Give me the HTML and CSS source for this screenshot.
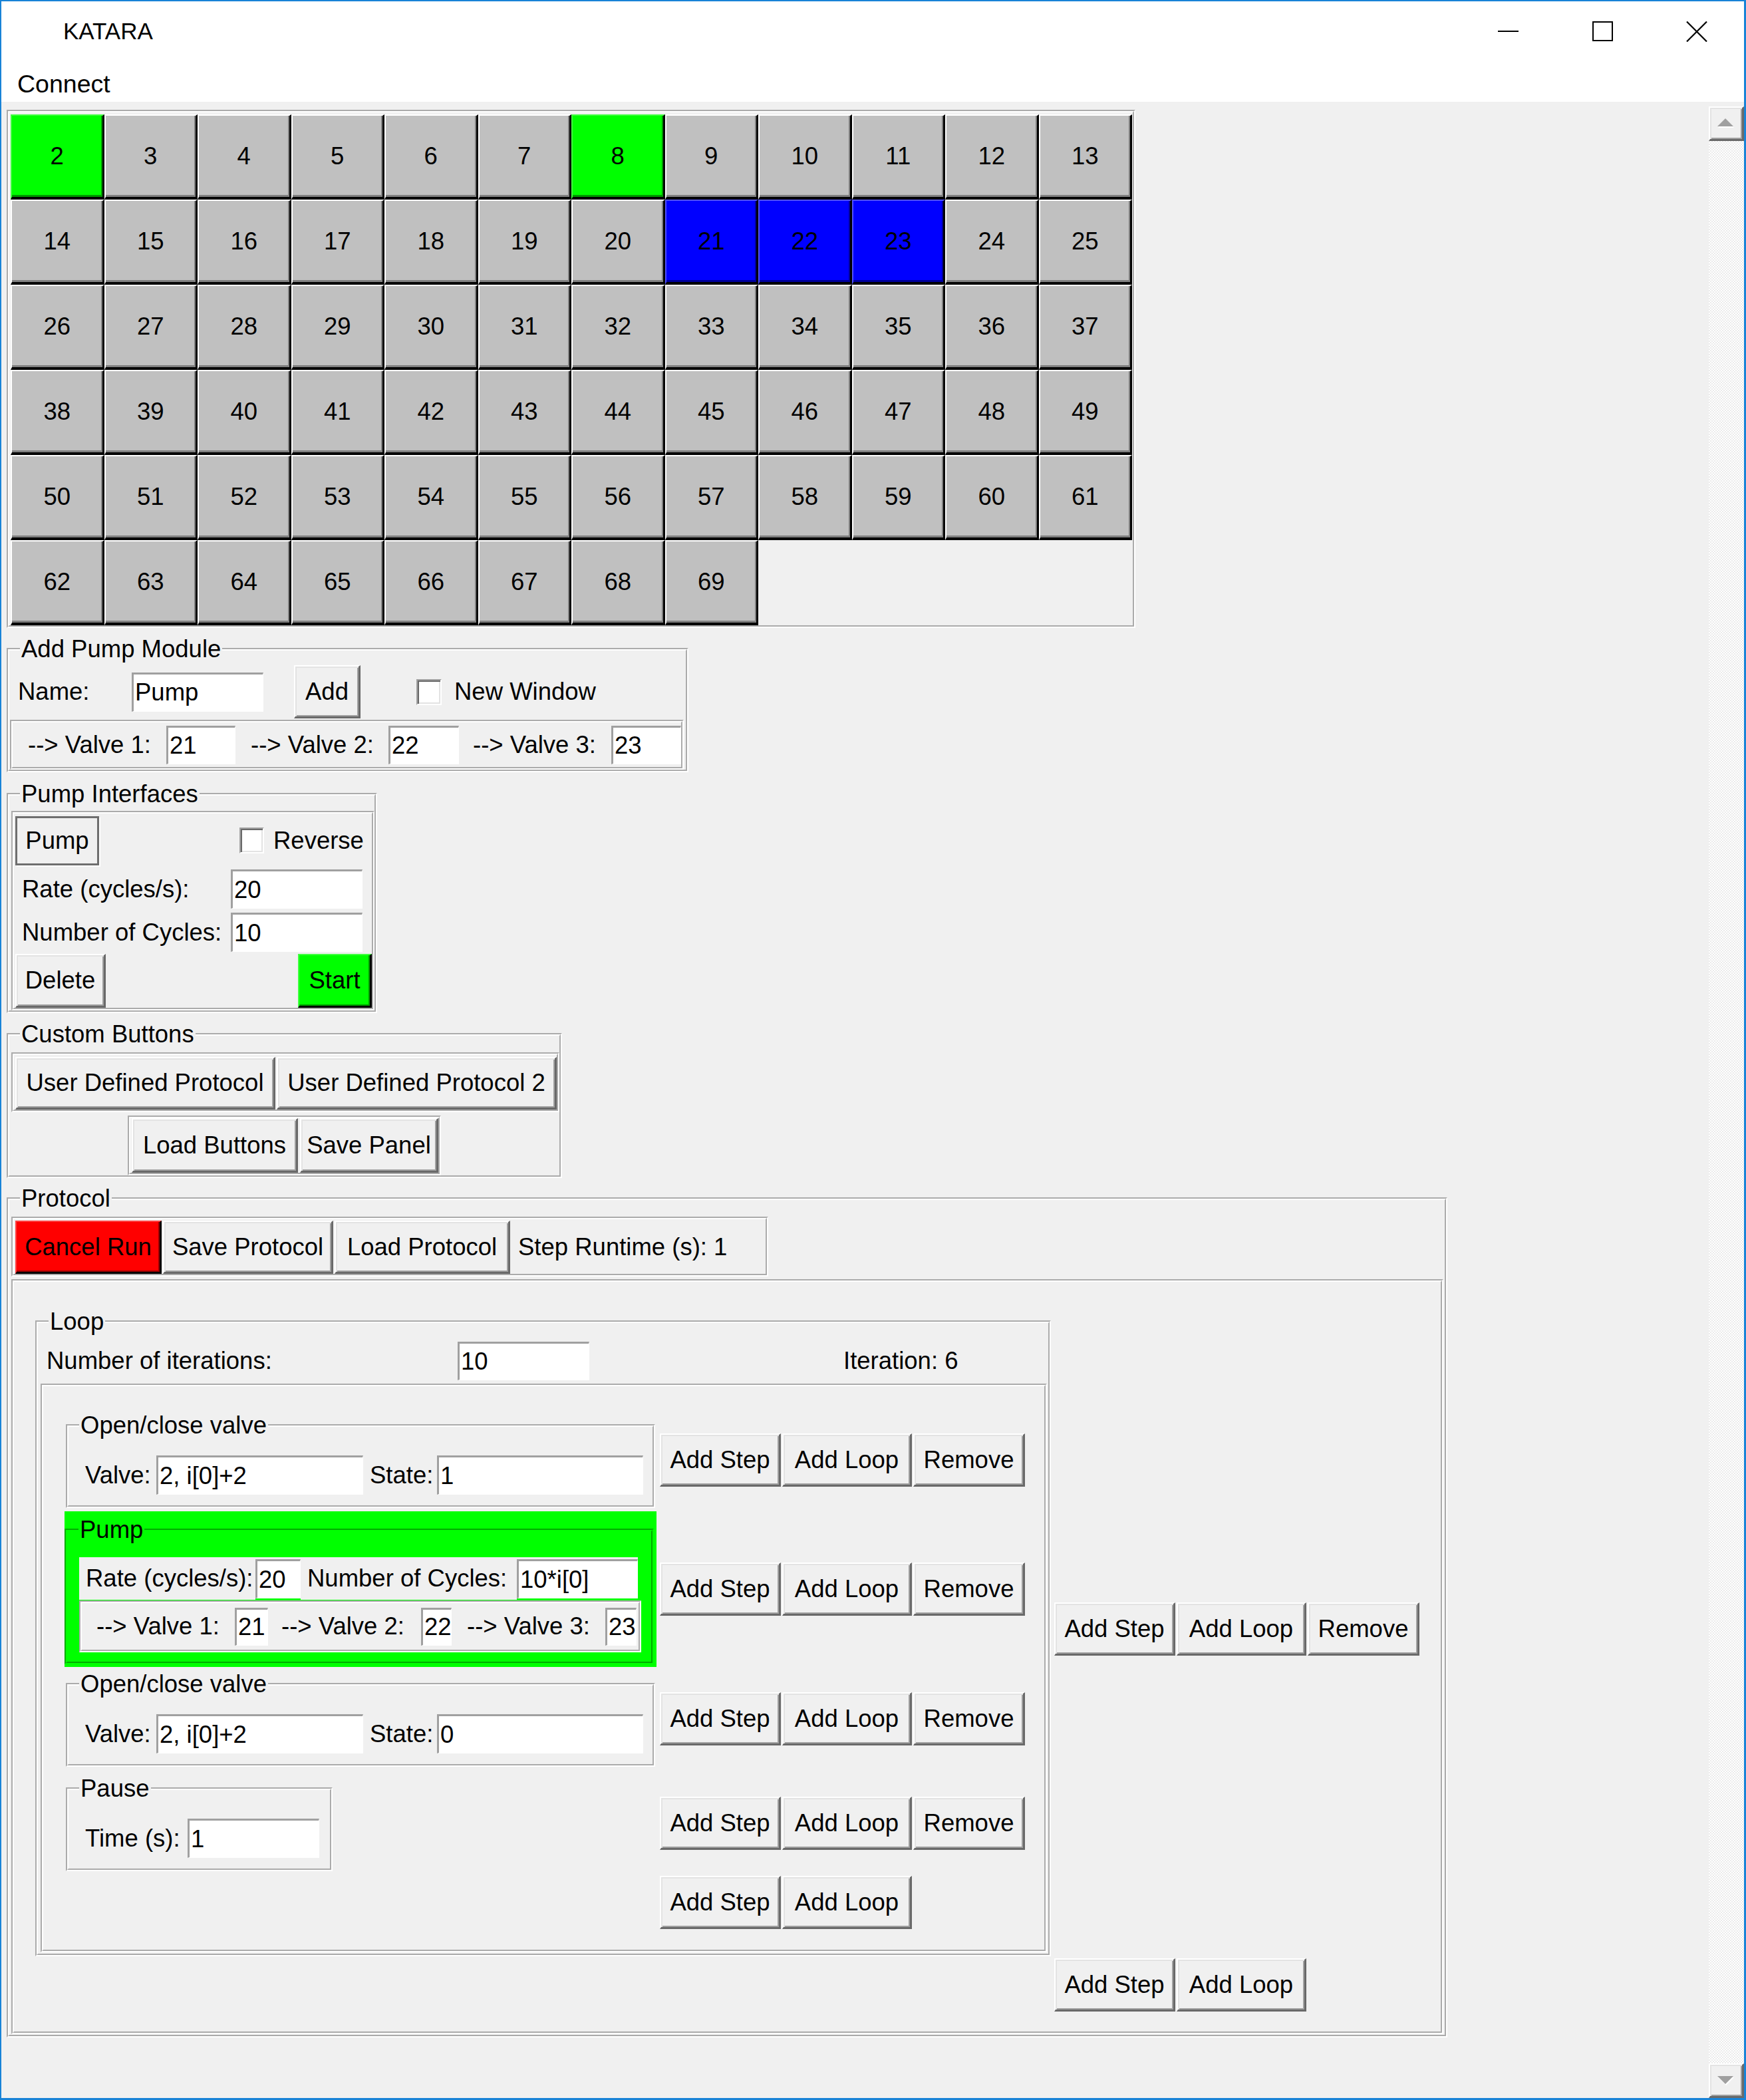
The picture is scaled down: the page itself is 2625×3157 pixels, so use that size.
FILE: index.html
```html
<!DOCTYPE html>
<html lang="en">
<head>
<meta charset="utf-8">
<title>KATARA</title>
<link rel="stylesheet" href="styles.css">
</head>
<body>
<div class="window">
  <div class="titlebar">
    <div class="title">KATARA</div>
    <div class="caps">
      <div class="cap"><svg width="31" height="2" viewBox="0 0 31 2"><rect width="31" height="2" fill="#000"/></svg></div>
      <div class="cap"><svg width="31" height="30" viewBox="0 0 31 30"><rect x="1" y="1" width="29" height="28" fill="none" stroke="#000" stroke-width="2"/></svg></div>
      <div class="cap"><svg width="32" height="31" viewBox="0 0 32 31"><path d="M1 0.5L31 30.5M31 0.5L1 30.5" stroke="#000" stroke-width="2.2" fill="none"/></svg></div>
    </div>
  </div>
  <div class="menubar"><span>Connect</span></div>
  <div class="client">
    <div class="main">
      <div class="groove valves">
        <div class="cell-grid">
          <div class="cell green">2</div><div class="cell">3</div><div class="cell">4</div><div class="cell">5</div><div class="cell">6</div><div class="cell">7</div><div class="cell green">8</div><div class="cell">9</div><div class="cell">10</div><div class="cell">11</div><div class="cell">12</div><div class="cell">13</div>
          <div class="cell">14</div><div class="cell">15</div><div class="cell">16</div><div class="cell">17</div><div class="cell">18</div><div class="cell">19</div><div class="cell">20</div><div class="cell blue">21</div><div class="cell blue">22</div><div class="cell blue">23</div><div class="cell">24</div><div class="cell">25</div>
          <div class="cell">26</div><div class="cell">27</div><div class="cell">28</div><div class="cell">29</div><div class="cell">30</div><div class="cell">31</div><div class="cell">32</div><div class="cell">33</div><div class="cell">34</div><div class="cell">35</div><div class="cell">36</div><div class="cell">37</div>
          <div class="cell">38</div><div class="cell">39</div><div class="cell">40</div><div class="cell">41</div><div class="cell">42</div><div class="cell">43</div><div class="cell">44</div><div class="cell">45</div><div class="cell">46</div><div class="cell">47</div><div class="cell">48</div><div class="cell">49</div>
          <div class="cell">50</div><div class="cell">51</div><div class="cell">52</div><div class="cell">53</div><div class="cell">54</div><div class="cell">55</div><div class="cell">56</div><div class="cell">57</div><div class="cell">58</div><div class="cell">59</div><div class="cell">60</div><div class="cell">61</div>
          <div class="cell">62</div><div class="cell">63</div><div class="cell">64</div><div class="cell">65</div><div class="cell">66</div><div class="cell">67</div><div class="cell">68</div><div class="cell">69</div>
        </div>
      </div>

      <fieldset class="lf addpump">
        <legend>Add Pump Module</legend>
        <div class="ap-row">
          <span class="lbl ap-name">Name:</span>
          <div class="entry e198">Pump</div>
          <div class="btn ap-add">Add</div>
          <div class="check ap-check"></div>
          <span class="lbl ap-new">New Window</span>
        </div>
        <div class="groove ap-valves">
          <span class="lbl apv1">--&gt; Valve 1:</span><div class="entry apve1">21</div>
          <span class="lbl apv2">--&gt; Valve 2:</span><div class="entry apve2">22</div>
          <span class="lbl apv3">--&gt; Valve 3:</span><div class="entry apve3">23</div>
        </div>
      </fieldset>

      <fieldset class="lf pumpif">
        <legend>Pump Interfaces</legend>
        <div class="groove pi-grid">
          <div class="btn-solid pi-pump">Pump</div>
          <div class="pi-rev"><div class="check pi-check"></div><span class="lbl">Reverse</span></div>
          <span class="lbl pi-lbl">Rate (cycles/s):</span>
          <div class="entry e198">20</div>
          <span class="lbl pi-lbl">Number of Cycles:</span>
          <div class="entry e198">10</div>
          <div class="btn pi-del">Delete</div>
          <div class="btn go pi-start">Start</div>
        </div>
      </fieldset>

      <fieldset class="lf custom">
        <legend>Custom Buttons</legend>
        <div class="groove cb-row1">
          <div class="btn cb-u1">User Defined Protocol</div>
          <div class="btn cb-u2">User Defined Protocol 2</div>
        </div>
        <div class="groove cb-row2">
          <div class="btn cb-load">Load Buttons</div>
          <div class="btn cb-save">Save Panel</div>
        </div>
      </fieldset>

      <fieldset class="lf protocol">
        <legend>Protocol</legend>
        <div class="groove toolbar">
          <div class="btn red tb-cancel">Cancel Run</div>
          <div class="btn tb-save">Save Protocol</div>
          <div class="btn tb-load">Load Protocol</div>
          <span class="lbl tb-runtime">Step Runtime (s): 1</span>
        </div>
        <div class="groove proto-body">
          <fieldset class="lf loop">
            <legend>Loop</legend>
            <div class="iter-row">
              <span class="lbl iter-lbl">Number of iterations:</span>
              <div class="entry e198 e-iter">10</div>
              <span class="lbl iter-count">Iteration: 6</span>
            </div>
            <div class="groove loop-body">
              <div class="step-row">
                <div class="step-left">
                  <fieldset class="lf step valve-step">
                    <legend>Open/close valve</legend>
                    <div class="step-fields">
                      <span class="lbl l-valve">Valve:</span><div class="entry e-valve">2, i[0]+2</div>
                      <span class="lbl l-state">State:</span><div class="entry e-state">1</div>
                    </div>
                  </fieldset>
                </div>
                <div class="btn-group">
                  <div class="btn b-step">Add Step</div><div class="btn b-loop">Add Loop</div><div class="btn b-rem">Remove</div>
                </div>
              </div>

              <div class="step-row gap5">
                <div class="step-left">
                  <div class="pump-wrap">
                    <fieldset class="lf pump-step">
                      <legend>Pump</legend>
                      <div class="pump-rate">
                        <span class="lbl pl-rate">Rate (cycles/s):</span><div class="entry e-prate">20</div>
                        <span class="lbl pl-cyc">Number of Cycles:</span><div class="entry e-pcyc">10*i[0]</div>
                      </div>
                      <div class="groove pump-valves">
                        <span class="lbl pv1">--&gt; Valve 1:</span><div class="entry e-pv1">21</div>
                        <span class="lbl pv2">--&gt; Valve 2:</span><div class="entry e-pv2">22</div>
                        <span class="lbl pv3">--&gt; Valve 3:</span><div class="entry e-pv3">23</div>
                      </div>
                    </fieldset>
                  </div>
                </div>
                <div class="btn-group">
                  <div class="btn b-step">Add Step</div><div class="btn b-loop">Add Loop</div><div class="btn b-rem">Remove</div>
                </div>
              </div>

              <div class="step-row gap6">
                <div class="step-left">
                  <fieldset class="lf step valve-step">
                    <legend>Open/close valve</legend>
                    <div class="step-fields">
                      <span class="lbl l-valve">Valve:</span><div class="entry e-valve">2, i[0]+2</div>
                      <span class="lbl l-state">State:</span><div class="entry e-state">0</div>
                    </div>
                  </fieldset>
                </div>
                <div class="btn-group">
                  <div class="btn b-step">Add Step</div><div class="btn b-loop">Add Loop</div><div class="btn b-rem">Remove</div>
                </div>
              </div>

              <div class="step-row gap13">
                <div class="step-left">
                  <fieldset class="lf step pause-step">
                    <legend>Pause</legend>
                    <div class="step-fields">
                      <span class="lbl l-time">Time (s):</span><div class="entry e198">1</div>
                    </div>
                  </fieldset>
                </div>
                <div class="btn-group">
                  <div class="btn b-step">Add Step</div><div class="btn b-loop">Add Loop</div><div class="btn b-rem">Remove</div>
                </div>
              </div>

              <div class="step-row gap7">
                <div class="step-left"></div>
                <div class="btn-group">
                  <div class="btn b-step">Add Step</div><div class="btn b-loop">Add Loop</div>
                </div>
              </div>
            </div>
          </fieldset>
          <div class="btn-group outer-top">
            <div class="btn b-step">Add Step</div><div class="btn b-loop">Add Loop</div><div class="btn b-rem">Remove</div>
          </div>
          <div class="btn-group outer-bottom">
            <div class="btn b-step">Add Step</div><div class="btn b-loop">Add Loop</div>
          </div>
        </div>
      </fieldset>
    </div>
    <div class="vscroll">
      <div class="sb-btn"><svg width="26" height="16" viewBox="0 0 26 16"><polygon points="1,14 13,2 25,14" fill="#fff"/><polygon points="0,12 12,0 24,12" fill="#a0a0a0"/></svg></div>
      <div class="sb-track"></div>
      <div class="sb-btn"><svg width="26" height="16" viewBox="0 0 26 16"><polygon points="1,3 25,3 13,15" fill="#fff"/><polygon points="0,1 24,1 12,13" fill="#a0a0a0"/></svg></div>
    </div>
  </div>
</div>
</body>
</html>
```

FILE: styles.css
```css
* { box-sizing: border-box; }
html, body { margin: 0; padding: 0; }
body {
  font-family: "Liberation Sans", Arial, sans-serif;
  font-size: 36.5px;
  line-height: 40px;
  color: #000;
  background: #fff;
}

/* window chrome */
.window {
  width: 2625px;
  height: 3157px;
  border-style: solid;
  border-color: #1883d7;
  border-width: 2px 3px 3px 2px;
  display: flex;
  flex-direction: column;
  background: #f0f0f0;
  overflow: hidden;
}
.titlebar {
  flex: none;
  height: 90px;
  background: #fff;
  display: flex;
  align-items: center;
}
.title { flex: 1; padding-left: 93px; font-size: 35px; }
.caps { display: flex; height: 100%; }
.cap { width: 142px; display: flex; align-items: center; justify-content: center; }
.cap svg { display: block; }
.menubar {
  flex: none;
  height: 61px;
  background: #fff;
  padding: 8px 0 0 24px;
  line-height: 53px;
  font-size: 37.5px;
}
.client { flex: 1; display: flex; min-height: 0; }
.main {
  flex: 1;
  padding: 12px 0 0 8px;
  display: flex;
  flex-direction: column;
  align-items: flex-start;
}

/* scrollbar */
.vscroll { width: 53px; margin-top: 7px; display: flex; flex-direction: column; }
.sb-btn {
  flex: none;
  height: 52px;
  background: #f0f0f0;
  border-style: solid;
  border-width: 2px 3px 3px 2px;
  border-color: #fff #696969 #696969 #fff;
  box-shadow: inset 2px 2px 0 #e3e3e3, inset -2px -2px 0 #a0a0a0;
  display: flex;
  align-items: center;
  justify-content: center;
}
.sb-track {
  flex: 1;
  background: repeating-conic-gradient(#ffffff 0% 25%, #ebebeb 0% 50%) 0 0 / 4px 4px;
}

/* generic widgets */
.groove { border: 4px groove #fff; }
.lbl { white-space: nowrap; flex: none; }
.entry {
  flex: none;
  background: #fff;
  border-style: solid;
  border-width: 3px 1px 1px 3px;
  border-color: #a0a0a0 #fff #fff #a0a0a0;
  padding-left: 2px;
  display: flex;
  align-items: center;
  white-space: nowrap;
  overflow: hidden;
  height: 59px;
}
.e198 { width: 198px; }
.btn {
  flex: none;
  display: flex;
  align-items: center;
  justify-content: center;
  white-space: nowrap;
  background: #f0f0f0;
  border-style: solid;
  border-width: 2px 3px 3px 2px;
  border-color: #fff #696969 #696969 #fff;
  box-shadow: inset 2px 2px 0 #e3e3e3, inset -2px -2px 0 #a0a0a0;
}
.btn.red {
  background: #ff0000;
  border-color: #ff4040 #000 #000 #ff4040;
  box-shadow: inset -2px -2px 0 #990000;
}
.btn.go {
  background: #00ff00;
  border-color: #40ff40 #000 #000 #40ff40;
  box-shadow: inset -2px -2px 0 #009900;
}
.btn-solid {
  display: flex;
  align-items: center;
  justify-content: center;
  background: #f0f0f0;
  border: 3px solid #6e6e6e;
  box-shadow: 2px 2px 0 #fff;
}
.check {
  flex: none;
  width: 38px;
  height: 39px;
  background: #fff;
  border-style: solid;
  border-width: 2px;
  border-color: #a0a0a0 #fff #fff #a0a0a0;
  box-shadow: inset 2px 2px 0 #696969, inset -2px -2px 0 #e3e3e3;
}

/* label frames */
.lf {
  margin: 0;
  padding: 0;
  min-width: 0;
  border: 4px groove #fff;
}
.lf > legend {
  margin-left: 16px;
  padding: 0 2px;
  height: 40px;
  line-height: 40px;
  white-space: nowrap;
}

/* valve grid */
.valves { width: 1697px; height: 779px; padding: 3px 1px 0 2px; }
.cell-grid {
  display: grid;
  grid-template-columns: repeat(12, 140.5px);
  grid-template-rows: repeat(6, 128px);
}
.cell {
  display: flex;
  align-items: center;
  justify-content: center;
  background: #c0c0c0;
  border-style: solid;
  border-width: 2px 3px 4px 2px;
  border-color: #fff #000 #000 #fff;
  box-shadow: inset -2px -3px 0 #808080;
}
.cell.green {
  background: #00ff00;
  border-color: #40ff40 #000 #000 #40ff40;
  box-shadow: inset -2px -3px 0 #009900;
}
.cell.blue {
  background: #0000ff;
  border-color: #5050ff #000 #000 #5050ff;
  box-shadow: inset -2px -3px 0 #000099;
}

/* add pump module */
.addpump { width: 1025px; margin-top: 12px; padding-top: 4px; }
.ap-row { display: flex; align-items: center; height: 80px; }
.ap-name { width: 184px; padding-left: 13px; }
.ap-add { width: 100px; height: 80px; margin-left: 46px; }
.ap-check { margin-left: 84px; }
.ap-new { margin-left: 19px; }
.ap-valves {
  margin: 2px 0 0 1px;
  width: 1013px;
  height: 75px;
  display: flex;
  align-items: center;
}
.ap-valves .entry { height: 58px; }
.apv1 { width: 231px; padding-left: 23px; }
.apv2 { width: 230px; padding-left: 23px; }
.apv3 { width: 229px; padding-left: 21px; }
.apve1 { width: 104px; }
.apve2 { width: 106px; }
.apve3 { width: 105px; }

/* pump interfaces */
.pumpif { width: 557px; margin-top: 13px; }
.pi-grid {
  margin: 5px 0 0 3px;
  width: 546px;
  height: 300px;
  display: grid;
  grid-template-columns: 326px 212px;
  grid-template-rows: 81px 65px 65px 81px;
  align-items: center;
}
.pi-pump { width: 126px; height: 74px; margin-left: 2px; justify-self: start; }
.pi-rev { display: flex; align-items: center; justify-self: start; margin-left: 13px; gap: 14px; }
.pi-check { width: 37px; }
.pi-lbl { padding-left: 12px; }
.pi-del { width: 136px; height: 81px; margin-left: 2px; justify-self: start; }
.pi-start { width: 111px; height: 81px; justify-self: end; }

/* custom buttons */
.custom { width: 835px; margin-top: 12px; }
.cb-row1 {
  margin: 7px 0 0 3px;
  width: 824px;
  height: 90px;
  padding: 3px 0 0 2px;
  display: flex;
  gap: 2px;
}
.cb-row1 .btn { height: 79px; }
.cb-u1 { width: 391px; }
.cb-u2 { width: 421px; }
.cb-row2 {
  margin: 5px auto 0;
  width: 471px;
  height: 90px;
  padding-left: 2px;
  display: flex;
  gap: 3px;
}
.cb-row2 .btn { height: 82px; }
.cb-load { width: 250px; }
.cb-save { width: 208px; }

/* protocol */
.protocol { width: 2166px; margin-top: 11px; padding-bottom: 1px; }
.toolbar {
  margin: 7px 0 0 3px;
  width: 1138px;
  height: 90px;
  padding: 2px 0 0 2px;
  display: flex;
  gap: 2px;
}
.toolbar .btn { height: 80px; }
.tb-cancel { width: 220px; }
.tb-save { width: 256px; }
.tb-load { width: 264px; }
.tb-runtime { padding-left: 10px; line-height: 80px; }
.proto-body {
  margin: 4px 0 0 3px;
  width: 2153px;
  padding: 40px 0 30px 32px;
  display: grid;
  grid-template-columns: 1527px auto;
  column-gap: 5px;
  align-items: start;
}
.btn-group { display: flex; gap: 2px; }
.btn-group .btn { height: 80px; }
.b-step { width: 182px; }
.b-loop { width: 195px; }
.b-rem { width: 168px; }
.outer-top { grid-column: 2; grid-row: 1; margin-top: 442px; }
.outer-bottom { grid-column: 2; grid-row: 2; margin-top: 3px; }

/* loop */
.loop { grid-column: 1; grid-row: 1; width: 1527px; padding-bottom: 2px; }
.iter-row { display: flex; align-items: center; height: 73px; padding-top: 5px; }
.iter-lbl { width: 631px; padding-left: 13px; }
.e-iter { height: 58px; }
.iter-count { margin-left: 382px; }
.loop-body {
  margin-left: 4px;
  width: 1513px;
  height: 855px;
  padding: 39px 0 31px 32px;
}
.step-row { display: flex; align-items: center; }
.step-row.gap5 { margin-top: 5px; }
.step-row.gap6 { margin-top: 6px; }
.step-row.gap13 { margin-top: 13px; }
.step-row.gap7 { margin-top: 7px; }
.step-left { width: 890px; flex: none; }
.step-row .btn-group { margin-left: 5px; }

.step { margin-left: 2px; padding: 25px 0 16px 0; }
.valve-step { width: 886px; }
.pause-step { width: 401px; }
.step-fields { display: flex; align-items: center; height: 59px; }
.l-valve { width: 132px; padding-left: 25px; }
.e-valve { width: 311px; }
.l-state { width: 111px; padding-left: 10px; }
.e-state { width: 310px; }
.l-time { width: 179px; padding-left: 25px; }

/* pump step (green) */
.pump-wrap { width: 890px; background: #00ff00; padding: 8px 4px 4px 0; }
.pump-step {
  width: 886px;
  background: #00ff00;
  border-color: #00ff00;
  padding: 21px 0 14px 18px;
}
.pump-step > legend { margin-left: -1px; }
.pump-rate { display: flex; height: 64px; width: 840px; }
.pump-rate .lbl { background: #f0f0f0; display: flex; align-items: center; padding-left: 10px; }
.pl-rate { width: 265px; }
.pl-cyc { width: 325px; }
.pump-rate .entry { margin-top: 3px; box-shadow: 0 -3px 0 #f0f0f0; }
.e-prate { width: 68px; }
.e-pcyc { width: 182px; }
.pump-valves {
  margin-top: 1px;
  width: 845px;
  height: 78px;
  background: #f0f0f0;
  display: flex;
  align-items: center;
}
.pump-valves .entry { height: 57px; }
.pv1 { width: 230px; padding-left: 22px; }
.pv2 { width: 230px; padding-left: 20px; }
.pv3 { width: 231px; padding-left: 23px; }
.e-pv1 { width: 50px; }
.e-pv2 { width: 46px; }
.e-pv3 { width: 47px; }
```
